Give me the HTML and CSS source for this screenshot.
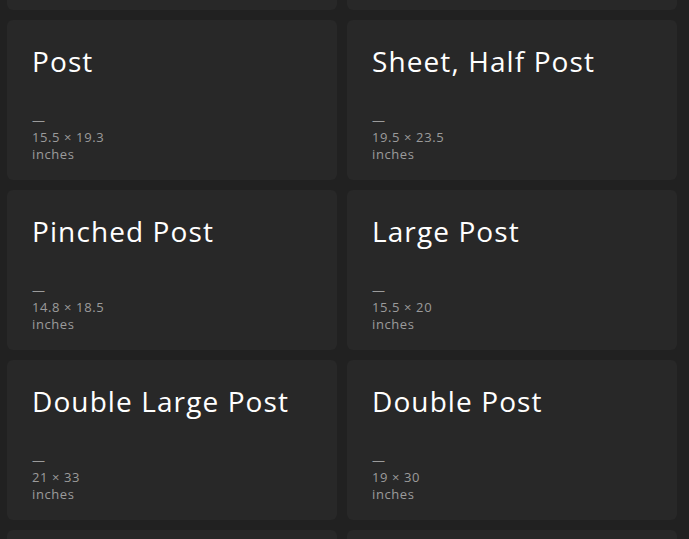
FILE: index.html
```html
<!DOCTYPE html>
<html lang="en">
<head>
<meta charset="utf-8">
<title>Paper sizes</title>
<link rel="stylesheet" href="styles.css">
</head>
<body>
<main class="grid">
  <article class="card"><h2 class="title">Half Post</h2><div class="meta"><span>—</span><span>12.5 × 15.5</span><span>inches</span></div></article>
  <article class="card"><h2 class="title">Foolscap</h2><div class="meta"><span>—</span><span>13.5 × 17</span><span>inches</span></div></article>
  <article class="card"><h2 class="title">Post</h2><div class="meta"><span>—</span><span>15.5 × 19.3</span><span>inches</span></div></article>
  <article class="card"><h2 class="title">Sheet, Half Post</h2><div class="meta"><span>—</span><span>19.5 × 23.5</span><span>inches</span></div></article>
  <article class="card"><h2 class="title">Pinched Post</h2><div class="meta"><span>—</span><span>14.8 × 18.5</span><span>inches</span></div></article>
  <article class="card"><h2 class="title">Large Post</h2><div class="meta"><span>—</span><span>15.5 × 20</span><span>inches</span></div></article>
  <article class="card"><h2 class="title">Double Large Post</h2><div class="meta"><span>—</span><span>21 × 33</span><span>inches</span></div></article>
  <article class="card"><h2 class="title">Double Post</h2><div class="meta"><span>—</span><span>19 × 30</span><span>inches</span></div></article>
  <article class="card"><h2 class="title">Medium</h2><div class="meta"><span>—</span><span>18 × 23</span><span>inches</span></div></article>
  <article class="card"><h2 class="title">Royal</h2><div class="meta"><span>—</span><span>20 × 25</span><span>inches</span></div></article>
</main>
</body>
</html>
```
FILE: styles.css
```css
html, body {
  margin: 0;
  padding: 0;
  background: #212121;
  overflow: hidden;
}
body {
  font-family: "Open Sans", "Liberation Sans", sans-serif;
}
.grid {
  display: grid;
  grid-template-columns: 330px 330px;
  grid-auto-rows: 160px;
  gap: 10px;
  padding-left: 7px;
  margin-top: -150px;
}
.card {
  background: #282828;
  border-radius: 6px;
  padding: 24px 26px 17px 25px;
  display: flex;
  flex-direction: column;
  justify-content: space-between;
  box-sizing: border-box;
}
.title {
  margin: 0;
  font-weight: 400;
  font-size: 28px;
  line-height: 34px;
  color: #ffffff;
  letter-spacing: 1.1px;
}
.meta {
  display: flex;
  flex-direction: column;
  font-size: 13px;
  line-height: 17px;
  color: #9b9b9b;
  letter-spacing: 0.6px;
}
```
